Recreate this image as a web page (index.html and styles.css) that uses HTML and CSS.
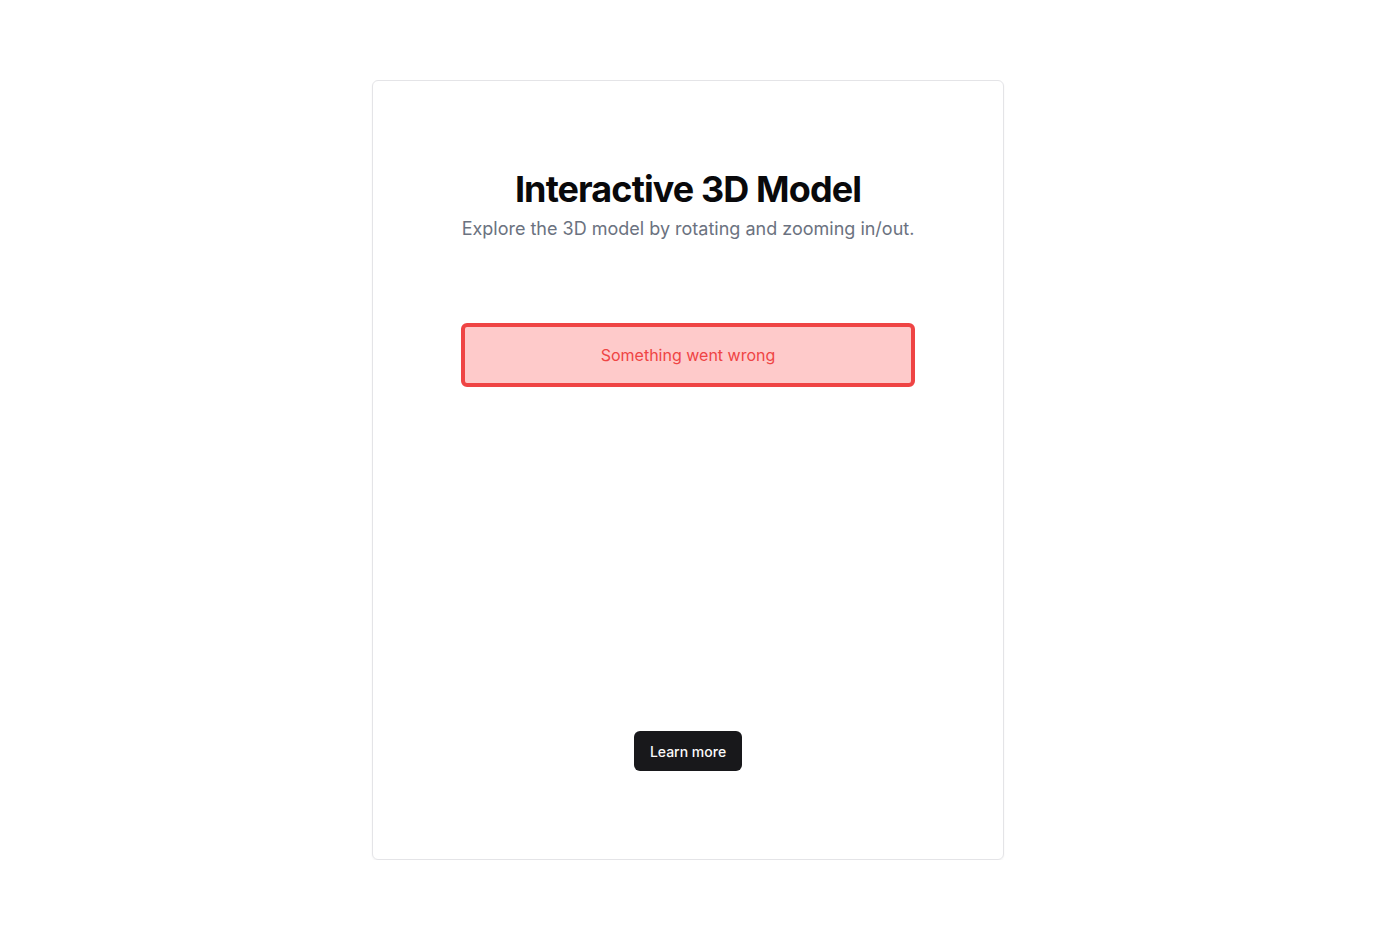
FILE: index.html
```html
<!DOCTYPE html>
<html lang="en">
<head>
<meta charset="utf-8">
<title>Interactive 3D Model</title>
<link rel="stylesheet" href="styles.css">
</head>
<body>
<main class="page">
  <section class="card">
    <header class="header">
      <h1 class="title">Interactive 3D Model</h1>
      <p class="subtitle">Explore the 3D model by rotating and zooming in/out.</p>
    </header>
    <div class="viewer">
      <div class="error">Something went wrong</div>
    </div>
    <div class="actions">
      <button class="btn">Learn more</button>
    </div>
  </section>
</main>
</body>
</html>
```
FILE: styles.css
```css
* { box-sizing: border-box; }
html, body { margin: 0; padding: 0; background: #fff; }
body {
  font-family: Inter, "Noto Sans", sans-serif;
  color: #09090b;
}
.page {
  display: flex;
  justify-content: center;
  padding-top: 80px;
}
.card {
  width: 632px;
  height: 780px;
  border: 1px solid #e4e4e7;
  border-radius: 6px;
  box-shadow: 0 1px 2px rgba(0,0,0,0.05);
  padding: 88px 88px;
  display: flex;
  flex-direction: column;
  align-items: center;
}
.header {
  text-align: center;
  width: 100%;
}
.title {
  margin: 0;
  font-size: 36px;
  line-height: 40px;
  font-weight: 700;
  letter-spacing: -0.025em;
  color: #09090b;
}
.subtitle {
  margin: 6px 0 0;
  font-size: 18px;
  line-height: 28px;
  color: #6b7280;
  white-space: nowrap;
}
.viewer {
  width: 100%;
  height: 408px;
  padding-top: 80px;
}
.error {
  height: 64px;
  border: 4px solid #ef4444;
  border-radius: 6px;
  background: #fecaca;
  color: #ef4444;
  font-size: 16px;
  display: flex;
  align-items: center;
  justify-content: center;
}
.actions {
  margin-top: 81px;
  display: flex;
  justify-content: center;
}
.btn {
  height: 40px;
  padding: 0 16px;
  border: none;
  border-radius: 6px;
  background: #18181b;
  color: #fafafa;
  font-family: Inter, "Noto Sans", sans-serif;
  font-size: 14px;
  font-weight: 500;
}
```
